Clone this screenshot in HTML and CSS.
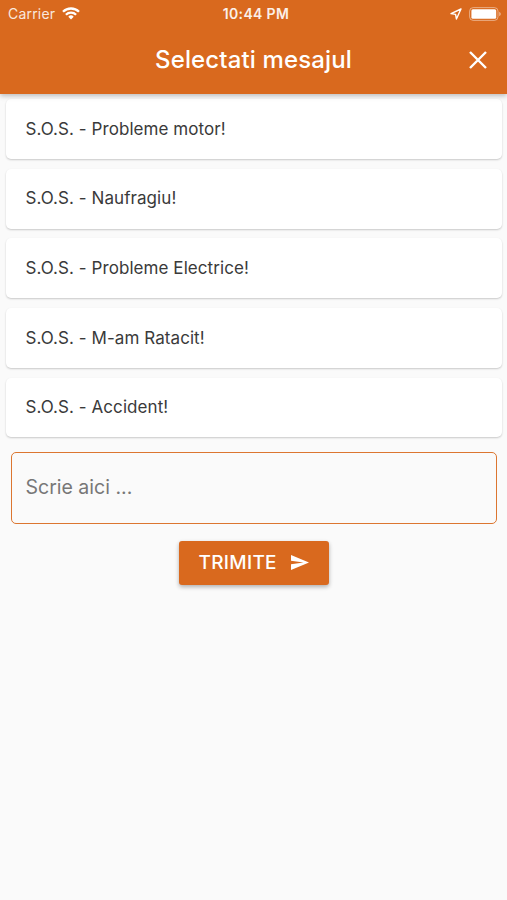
FILE: index.html
```html
<!DOCTYPE html>
<html lang="ro">
<head>
<meta charset="utf-8">
<title>Selectati mesajul</title>
<link rel="stylesheet" href="styles.css">
</head>
<body>
<header class="appbar">
  <div class="status">
    <div class="status-left">
      <span class="carrier">Carrier</span>
      <svg class="wifi" width="18" height="13" viewBox="0 0 18 13" fill="none" stroke="#fff" stroke-width="2.3">
        <path d="M1 4.8a11.3 11.3 0 0 1 16 0"/>
        <path d="M3.9 7.8a7.2 7.2 0 0 1 10.2 0"/>
        <path d="M9 12.4L6.3 9.7a3.8 3.8 0 0 1 5.4 0z" fill="#fff" stroke="none"/>
      </svg>
    </div>
    <span class="time">10:44 PM</span>
    <div class="status-right">
      <svg class="location" width="12" height="12" viewBox="0 0 12 12" fill="none" stroke="#fff" stroke-width="1.4" stroke-linejoin="round">
        <path d="M11 1L1 5.6l4.6.8.8 4.6z"/>
      </svg>
      <svg width="32" height="14" viewBox="0 0 32 14">
        <rect x=".6" y=".6" width="28.4" height="12.8" rx="3.6" fill="none" stroke="#fff" stroke-opacity=".45"/>
        <rect x="2.4" y="2.3" width="24.8" height="9.4" rx="1.5" fill="#fff"/>
        <path d="M30.2 4.8q1.6.8 1.6 2.2t-1.6 2.2z" fill="#fff" fill-opacity=".5"/>
      </svg>
    </div>
  </div>
  <div class="toolbar">
    <h1 class="title">Selectati mesajul</h1>
    <button class="close" aria-label="Inchide">
      <svg width="18" height="18" viewBox="0 0 18 18" fill="none" stroke="#fff" stroke-width="2.4"><path d="M1 1l16 16M17 1L1 17"/></svg>
    </button>
  </div>
</header>
<main class="content">
  <ul class="messages">
    <li class="card"><span>S.O.S. - Probleme motor!</span></li>
    <li class="card"><span>S.O.S. - Naufragiu!</span></li>
    <li class="card"><span>S.O.S. - Probleme Electrice!</span></li>
    <li class="card"><span>S.O.S. - M-am Ratacit!</span></li>
    <li class="card"><span>S.O.S. - Accident!</span></li>
  </ul>
  <div class="field"><span>Scrie aici ...</span></div>
  <button class="send">
    <span>TRIMITE</span>
    <svg width="18" height="15" viewBox="0 0 18 15" fill="#fff"><path d="M0 15L18 7.5 0 0v5.8l12.5 1.7L0 9.2z"/></svg>
  </button>
</main>
</body>
</html>
```
FILE: styles.css
```css
* { box-sizing: border-box; }
body {
  margin: 0;
  min-height: 900px;
  background: #fafafa;
  font-family: Inter, "Liberation Sans", sans-serif;
}
button { border: 0; padding: 0; background: none; color: inherit; font-family: inherit; }
.appbar {
  position: relative;
  height: 94px;
  background: #d9691e;
  color: #fff;
  box-shadow: 0 2px 5px rgba(0, 0, 0, .25);
}
.status {
  display: grid;
  grid-template-columns: 1fr auto 1fr;
  align-items: center;
  height: 27px;
  padding: 0 6px 0 8px;
}
.status-left { display: flex; align-items: center; gap: 7px; }
.carrier { font-size: 14px; letter-spacing: .2px; opacity: .85; }
.time { padding-left: 3px; font-size: 14px; font-weight: 600; letter-spacing: .35px; opacity: .9; }
.status-right { display: flex; align-items: center; justify-content: flex-end; gap: 7px; }
.toolbar {
  display: grid;
  grid-template-columns: 60px 1fr 60px;
  align-items: center;
  height: 66px;
}
.title {
  grid-column: 2;
  margin: 0;
  padding-bottom: 1px;
  text-align: center;
  font-size: 24px;
  font-weight: 500;
  letter-spacing: .13px;
  white-space: nowrap;
}
.close { display: flex; justify-content: center; padding-left: 1px; }
.content { display: flex; flex-direction: column; padding: 5px 5px 0; }
.messages {
  display: flex;
  flex-direction: column;
  gap: 9.7px;
  margin: 0;
  padding: 0;
  list-style: none;
}
.card {
  display: flex;
  align-items: center;
  height: 60px;
  margin-left: 1px;
  padding: 0 19.5px 1px;
  border-radius: 5px;
  background: #fff;
  color: #3a3a3a;
  font-size: 17px;
  letter-spacing: .07px;
  box-shadow: 0 1px 2px rgba(0, 0, 0, .2);
}
.card:last-child { height: 59.2px; }
.field {
  display: flex;
  align-items: center;
  height: 72px;
  margin: 15px 5px 0 6px;
  padding: 0 14px 2px 13.5px;
  border: 1px solid #dc7630;
  border-radius: 5px;
  color: #777;
  font-size: 19.5px;
}
.send {
  display: flex;
  align-items: center;
  align-self: center;
  gap: 14px;
  width: 150px;
  height: 44px;
  margin-top: 17px;
  padding-left: 20px;
  border-radius: 3px;
  background: #d9691e;
  color: #fff;
  font-size: 19px;
  font-weight: 500;
  letter-spacing: .3px;
  box-shadow: 0 2px 4px rgba(0, 0, 0, .3);
}
```
